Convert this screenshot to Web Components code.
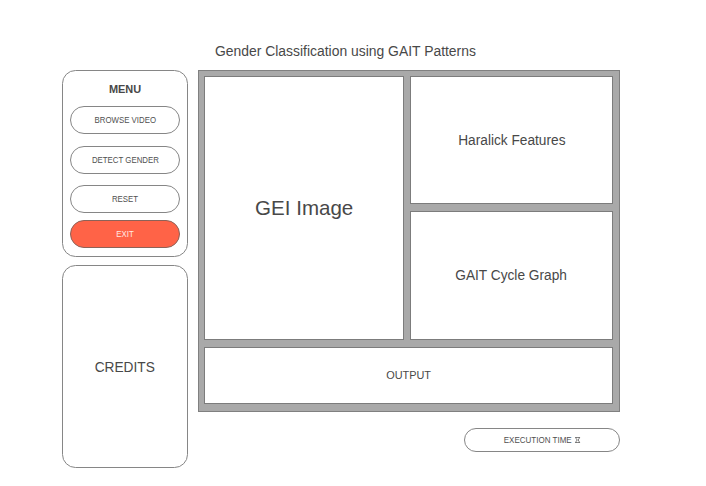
<!DOCTYPE html>
<html lang="en">
<head>
<meta charset="utf-8">
<title>Gender Classification using GAIT Patterns</title>
<style>
html, body { margin: 0; background: #fff; }
</style>
</head>
<body>
<gait-app></gait-app>
<script>
class OutlinePanel extends HTMLElement {
  constructor() {
    super();
    this.attachShadow({ mode: 'open' }).innerHTML = `
      <style>
        :host { box-sizing: border-box; display: flex; align-items: center; justify-content: center;
          border: 1px solid #7c7c7c; background: #fff; white-space: nowrap; min-width: 0; min-height: 0; }
        span { display: block; transform: scaleX(var(--squeeze, .978)); }
      </style><span><slot></slot></span>`;
  }
}
customElements.define('outline-panel', OutlinePanel);

class PillButton extends HTMLElement {
  constructor() {
    super();
    this.attachShadow({ mode: 'open' }).innerHTML = `
      <style>
        :host { display: block; height: 28px; }
        button { box-sizing: border-box; width: 100%; height: 100%; padding: 0; border: 1px solid #868686;
          border-radius: 14px; background: #fff; color: #505050; font: inherit; font-size: 9px;
          display: flex; align-items: center; justify-content: center; white-space: nowrap; }
        span { display: flex; align-items: center; transform: scaleX(var(--squeeze, .872)); }
        :host([danger]) button { background: #ff6347; border-color: #8c6258; color: #ffe9e4; }
      </style><button><span><slot></slot></span></button>`;
  }
}
customElements.define('pill-button', PillButton);

class SideMenu extends HTMLElement {
  constructor() {
    super();
    this.attachShadow({ mode: 'open' }).innerHTML = `
      <style>
        :host { box-sizing: border-box; display: flex; flex-direction: column; border: 1px solid #868686;
          border-radius: 13.5px; padding: 12px 7px 0; }
        h2 { margin: 0 0 10px; font-size: 10.96px; line-height: 13px; text-align: center; }
        .a { margin-bottom: 12px; } .b { margin-bottom: 11px; } .c { margin-bottom: 7px; }
      </style>
      <h2>MENU</h2>
      <pill-button class="a">BROWSE VIDEO</pill-button>
      <pill-button class="b">DETECT GENDER</pill-button>
      <pill-button class="c">RESET</pill-button>
      <pill-button danger>EXIT</pill-button>`;
  }
}
customElements.define('side-menu', SideMenu);

class ResultBoard extends HTMLElement {
  constructor() {
    super();
    this.attachShadow({ mode: 'open' }).innerHTML = `
      <style>
        :host { box-sizing: border-box; display: grid; border: 1px solid #808080; background: #a9a9a9;
          padding: 5px 6px 7px 5px; grid-template-columns: 200px 203px; column-gap: 6px;
          grid-template-rows: 128px 129px 57px; row-gap: 7px; font-size: 14px; }
        .gei { grid-row: 1 / 3; font-size: 21px; }
        .graph { padding-bottom: 1px; }
        .out { grid-column: 1 / 3; font-size: 11px; padding-bottom: 1px; --squeeze: .99; }
      </style>
      <outline-panel class="gei">GEI Image</outline-panel>
      <outline-panel>Haralick Features</outline-panel>
      <outline-panel class="graph">GAIT Cycle Graph</outline-panel>
      <outline-panel class="out">OUTPUT</outline-panel>`;
  }
}
customElements.define('result-board', ResultBoard);

class GaitApp extends HTMLElement {
  constructor() {
    super();
    this.attachShadow({ mode: 'open' }).innerHTML = `
      <style>
        :host { box-sizing: border-box; display: grid; width: 706px; height: 486px; padding: 43px 0 0 62px;
          grid-template-columns: 126px 422px; column-gap: 10px; grid-template-rows: 16px 399px;
          row-gap: 11px; align-content: start; color: #484848;
          font-family: "Liberation Sans", Arial, sans-serif; }
        h1 { grid-column: 2; margin: 0 0 0 17px; font-size: 14px; font-weight: 400; line-height: 16px; white-space: nowrap;
          transform: scaleX(.993); transform-origin: left; }
        .side { display: grid; grid-template-rows: 187px 203px; row-gap: 8px; }
        .main { display: grid; grid-template-rows: 342px 24px; row-gap: 16px; align-content: start; }
        .credits { border-color: #868686; border-radius: 13.5px; font-size: 14px; padding-top: 1px; }
        .time { width: 156px; height: 24px; justify-self: end; --squeeze: .89; }
        svg { width: 6px; height: 6px; margin-left: 4px; }
      </style>
      <h1>Gender Classification using GAIT Patterns</h1>
      <div class="side"><side-menu></side-menu><outline-panel class="credits">CREDITS</outline-panel></div>
      <div class="main">
        <result-board></result-board>
        <pill-button class="time">EXECUTION TIME
          <svg viewBox="0 0 6 6" preserveAspectRatio="none" fill="none" stroke="#505050" stroke-width=".8"><path d="M0 .4H6M0 5.6H6M1.3 .4V1.5L2.5 3L1.3 4.5V5.6M4.7 .4V1.5L3.5 3L4.7 4.5V5.6"/></svg>
        </pill-button>
      </div>`;
  }
}
customElements.define('gait-app', GaitApp);
</script>
</body>
</html>
